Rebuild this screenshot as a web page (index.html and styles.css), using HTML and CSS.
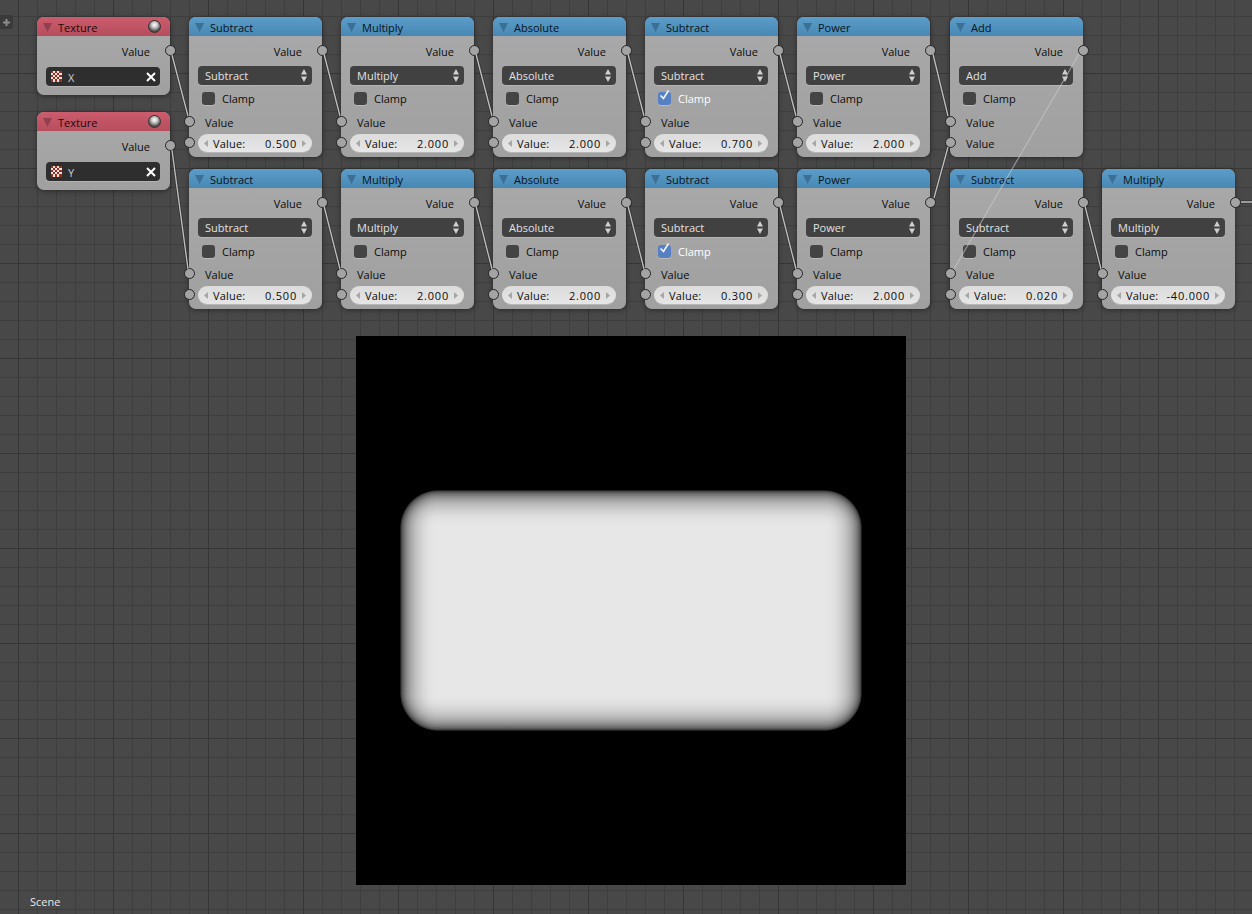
FILE: index.html
```html
<!DOCTYPE html>
<html lang="en">
<head>
<meta charset="utf-8">
<title>Node editor</title>
<link rel="stylesheet" href="styles.css">
</head>
<body>
<svg class="defs" width="0" height="0" aria-hidden="true">
  <symbol id="fold" viewBox="0 0 9 9"><path d="M0 0H9L4.5 9Z"/></symbol>
  <symbol id="updown" viewBox="0 0 6 13"><path d="M3 0L6 5.5H0ZM0 7.5H6L3 13Z"/></symbol>
  <symbol id="left" viewBox="0 0 4 7"><path d="M4 0V7L0 3.5Z"/></symbol>
  <symbol id="right" viewBox="0 0 4 7"><path d="M0 0V7L4 3.5Z"/></symbol>
  <symbol id="tick" viewBox="0 0 13 13"><path d="M2.5 6.5L5.5 9.5L10.5 1.5" fill="none" stroke="#eef3fb" stroke-width="1.7"/></symbol>
  <symbol id="cross" viewBox="0 0 10 10"><path d="M1 1L9 9M9 1L1 9" fill="none" stroke="#fff" stroke-width="2"/></symbol>
  <symbol id="plus" viewBox="0 0 7 7"><path d="M3.5 0V7M0 3.5H7" fill="none" stroke="#8c8c8c" stroke-width="2"/></symbol>
  <symbol id="checker" viewBox="0 0 11 11">
    <rect width="11" height="11" fill="#f0e4e0"/>
    <path fill="#a02c20" d="M0 0h2v2H0zM4 0h2v2H4zM8 0h3v2H8zM2 2h2v2H2zM6 2h2v2H6zM0 4h2v2H0zM4 4h2v2H4zM8 4h3v2H8zM2 6h2v2H2zM6 6h2v2H6zM0 8h2v3H0zM4 8h2v3H4zM8 8h3v3H8z"/>
  </symbol>
</svg>

<main class="canvas">
  <div class="plus-tab"><svg class="plus-icon"><use href="#plus"/></svg></div>

  <div class="render">
    <div class="corner c-tl"></div><div class="edge e-t"></div><div class="corner c-tr"></div>
    <div class="edge e-l"></div><div class="core"></div><div class="edge e-r"></div>
    <div class="corner c-bl"></div><div class="edge e-b"></div><div class="corner c-br"></div>
  </div>

  <article class="node texture tex-x">
    <header class="head"><svg class="fold"><use href="#fold"/></svg><span>Texture</span><span class="sphere"></span></header>
    <div class="body">
      <div class="out">Value</div>
      <div class="tex-field"><svg class="checker"><use href="#checker"/></svg><span class="tex-name">X</span><svg class="cross"><use href="#cross"/></svg></div>
    </div>
    <i class="socket s-out"></i>
  </article>
  <article class="node texture tex-y">
    <header class="head"><svg class="fold"><use href="#fold"/></svg><span>Texture</span><span class="sphere"></span></header>
    <div class="body">
      <div class="out">Value</div>
      <div class="tex-field"><svg class="checker"><use href="#checker"/></svg><span class="tex-name">Y</span><svg class="cross"><use href="#cross"/></svg></div>
    </div>
    <i class="socket s-out"></i>
  </article>

  <article class="node math col-1 row-a">
    <header class="head"><svg class="fold"><use href="#fold"/></svg><span>Subtract</span></header>
    <div class="body">
      <div class="out">Value</div>
      <div class="select"><span>Subtract</span><svg class="updown"><use href="#updown"/></svg></div>
      <div class="check"><span class="box"></span><span>Clamp</span></div>
      <div class="in">Value</div>
      <div class="field"><svg class="arrow"><use href="#left"/></svg><span class="f-label">Value:</span><span class="f-num">0.500</span><svg class="arrow"><use href="#right"/></svg></div>
    </div>
    <i class="socket s-out"></i><i class="socket s-a"></i><i class="socket s-b"></i>
  </article>
  <article class="node math col-2 row-a">
    <header class="head"><svg class="fold"><use href="#fold"/></svg><span>Multiply</span></header>
    <div class="body">
      <div class="out">Value</div>
      <div class="select"><span>Multiply</span><svg class="updown"><use href="#updown"/></svg></div>
      <div class="check"><span class="box"></span><span>Clamp</span></div>
      <div class="in">Value</div>
      <div class="field"><svg class="arrow"><use href="#left"/></svg><span class="f-label">Value:</span><span class="f-num">2.000</span><svg class="arrow"><use href="#right"/></svg></div>
    </div>
    <i class="socket s-out"></i><i class="socket s-a"></i><i class="socket s-b"></i>
  </article>
  <article class="node math col-3 row-a">
    <header class="head"><svg class="fold"><use href="#fold"/></svg><span>Absolute</span></header>
    <div class="body">
      <div class="out">Value</div>
      <div class="select"><span>Absolute</span><svg class="updown"><use href="#updown"/></svg></div>
      <div class="check"><span class="box"></span><span>Clamp</span></div>
      <div class="in">Value</div>
      <div class="field"><svg class="arrow"><use href="#left"/></svg><span class="f-label">Value:</span><span class="f-num">2.000</span><svg class="arrow"><use href="#right"/></svg></div>
    </div>
    <i class="socket s-out"></i><i class="socket s-a"></i><i class="socket s-b"></i>
  </article>
  <article class="node math col-4 row-a">
    <header class="head"><svg class="fold"><use href="#fold"/></svg><span>Subtract</span></header>
    <div class="body">
      <div class="out">Value</div>
      <div class="select"><span>Subtract</span><svg class="updown"><use href="#updown"/></svg></div>
      <div class="check on"><span class="box"><svg class="tick"><use href="#tick"/></svg></span><span>Clamp</span></div>
      <div class="in">Value</div>
      <div class="field"><svg class="arrow"><use href="#left"/></svg><span class="f-label">Value:</span><span class="f-num">0.700</span><svg class="arrow"><use href="#right"/></svg></div>
    </div>
    <i class="socket s-out"></i><i class="socket s-a"></i><i class="socket s-b"></i>
  </article>
  <article class="node math col-5 row-a">
    <header class="head"><svg class="fold"><use href="#fold"/></svg><span>Power</span></header>
    <div class="body">
      <div class="out">Value</div>
      <div class="select"><span>Power</span><svg class="updown"><use href="#updown"/></svg></div>
      <div class="check"><span class="box"></span><span>Clamp</span></div>
      <div class="in">Value</div>
      <div class="field"><svg class="arrow"><use href="#left"/></svg><span class="f-label">Value:</span><span class="f-num">2.000</span><svg class="arrow"><use href="#right"/></svg></div>
    </div>
    <i class="socket s-out"></i><i class="socket s-a"></i><i class="socket s-b"></i>
  </article>
  <article class="node math col-6 row-a">
    <header class="head"><svg class="fold"><use href="#fold"/></svg><span>Add</span></header>
    <div class="body">
      <div class="out">Value</div>
      <div class="select"><span>Add</span><svg class="updown"><use href="#updown"/></svg></div>
      <div class="check"><span class="box"></span><span>Clamp</span></div>
      <div class="in">Value</div>
      <div class="in in-last">Value</div>
    </div>
    <i class="socket s-out"></i><i class="socket s-a"></i><i class="socket s-b"></i>
  </article>

  <article class="node math col-1 row-b">
    <header class="head"><svg class="fold"><use href="#fold"/></svg><span>Subtract</span></header>
    <div class="body">
      <div class="out">Value</div>
      <div class="select"><span>Subtract</span><svg class="updown"><use href="#updown"/></svg></div>
      <div class="check"><span class="box"></span><span>Clamp</span></div>
      <div class="in">Value</div>
      <div class="field"><svg class="arrow"><use href="#left"/></svg><span class="f-label">Value:</span><span class="f-num">0.500</span><svg class="arrow"><use href="#right"/></svg></div>
    </div>
    <i class="socket s-out"></i><i class="socket s-a"></i><i class="socket s-b"></i>
  </article>
  <article class="node math col-2 row-b">
    <header class="head"><svg class="fold"><use href="#fold"/></svg><span>Multiply</span></header>
    <div class="body">
      <div class="out">Value</div>
      <div class="select"><span>Multiply</span><svg class="updown"><use href="#updown"/></svg></div>
      <div class="check"><span class="box"></span><span>Clamp</span></div>
      <div class="in">Value</div>
      <div class="field"><svg class="arrow"><use href="#left"/></svg><span class="f-label">Value:</span><span class="f-num">2.000</span><svg class="arrow"><use href="#right"/></svg></div>
    </div>
    <i class="socket s-out"></i><i class="socket s-a"></i><i class="socket s-b"></i>
  </article>
  <article class="node math col-3 row-b">
    <header class="head"><svg class="fold"><use href="#fold"/></svg><span>Absolute</span></header>
    <div class="body">
      <div class="out">Value</div>
      <div class="select"><span>Absolute</span><svg class="updown"><use href="#updown"/></svg></div>
      <div class="check"><span class="box"></span><span>Clamp</span></div>
      <div class="in">Value</div>
      <div class="field"><svg class="arrow"><use href="#left"/></svg><span class="f-label">Value:</span><span class="f-num">2.000</span><svg class="arrow"><use href="#right"/></svg></div>
    </div>
    <i class="socket s-out"></i><i class="socket s-a"></i><i class="socket s-b"></i>
  </article>
  <article class="node math col-4 row-b">
    <header class="head"><svg class="fold"><use href="#fold"/></svg><span>Subtract</span></header>
    <div class="body">
      <div class="out">Value</div>
      <div class="select"><span>Subtract</span><svg class="updown"><use href="#updown"/></svg></div>
      <div class="check on"><span class="box"><svg class="tick"><use href="#tick"/></svg></span><span>Clamp</span></div>
      <div class="in">Value</div>
      <div class="field"><svg class="arrow"><use href="#left"/></svg><span class="f-label">Value:</span><span class="f-num">0.300</span><svg class="arrow"><use href="#right"/></svg></div>
    </div>
    <i class="socket s-out"></i><i class="socket s-a"></i><i class="socket s-b"></i>
  </article>
  <article class="node math col-5 row-b">
    <header class="head"><svg class="fold"><use href="#fold"/></svg><span>Power</span></header>
    <div class="body">
      <div class="out">Value</div>
      <div class="select"><span>Power</span><svg class="updown"><use href="#updown"/></svg></div>
      <div class="check"><span class="box"></span><span>Clamp</span></div>
      <div class="in">Value</div>
      <div class="field"><svg class="arrow"><use href="#left"/></svg><span class="f-label">Value:</span><span class="f-num">2.000</span><svg class="arrow"><use href="#right"/></svg></div>
    </div>
    <i class="socket s-out"></i><i class="socket s-a"></i><i class="socket s-b"></i>
  </article>
  <article class="node math col-6 row-b">
    <header class="head"><svg class="fold"><use href="#fold"/></svg><span>Subtract</span></header>
    <div class="body">
      <div class="out">Value</div>
      <div class="select"><span>Subtract</span><svg class="updown"><use href="#updown"/></svg></div>
      <div class="check"><span class="box"></span><span>Clamp</span></div>
      <div class="in">Value</div>
      <div class="field"><svg class="arrow"><use href="#left"/></svg><span class="f-label">Value:</span><span class="f-num">0.020</span><svg class="arrow"><use href="#right"/></svg></div>
    </div>
    <i class="socket s-out"></i><i class="socket s-a"></i><i class="socket s-b"></i>
  </article>
  <article class="node math col-7 row-b">
    <header class="head"><svg class="fold"><use href="#fold"/></svg><span>Multiply</span></header>
    <div class="body">
      <div class="out">Value</div>
      <div class="select"><span>Multiply</span><svg class="updown"><use href="#updown"/></svg></div>
      <div class="check"><span class="box"></span><span>Clamp</span></div>
      <div class="in">Value</div>
      <div class="field"><svg class="arrow"><use href="#left"/></svg><span class="f-label">Value:</span><span class="f-num">-40.000</span><svg class="arrow"><use href="#right"/></svg></div>
    </div>
    <i class="socket s-out"></i><i class="socket s-a"></i><i class="socket s-b"></i>
  </article>

  <svg class="wires" viewBox="0 0 1252 914" aria-hidden="true">
    <g class="wire-under">
      <path d="M172 55L188 116M172 150L188 269M324 54L340 116M324 206L340 269M476 54L492 116M476 206L492 269M628 54L644 116M628 206L644 269M780 54L796 116M780 206L796 269M933 54L948 116M1085 206L1101 269M934 198L948 147M1241 202H1252"/>
    </g>
    <g class="wire">
      <path d="M172 55L188 116M172 150L188 269M324 54L340 116M324 206L340 269M476 54L492 116M476 206L492 269M628 54L644 116M628 206L644 269M780 54L796 116M780 206L796 269M933 54L948 116M1085 206L1101 269M934 198L948 147M1241 202H1252"/>
    </g>
    <path class="wire-thin" d="M1079 54L954 269"/>
  </svg>

  <div class="scene">Scene</div>
</main>
</body>
</html>
```
FILE: styles.css
```css
:root {
  --ramp: rgb(231,231,231) 0%, rgb(230,230,230) 10%, rgb(227,227,227) 20%, rgb(222,222,222) 30%,
    rgb(214,214,214) 40%, rgb(203,203,203) 50%, rgb(190,190,190) 60%, rgb(171,171,171) 70%,
    rgb(146,146,146) 80%, rgb(109,109,109) 90%, rgb(79,79,79) 95%, rgb(50,50,50) 98%, rgb(0,0,0) 100%;
}

* { box-sizing: border-box; }

html, body { margin: 0; padding: 0; }

body {
  width: 1252px;
  height: 914px;
  overflow: hidden;
  background: #484848;
  font-family: "Open Sans", "Noto Sans", "Liberation Sans", sans-serif;
  font-size: 11px;
  line-height: 14px;
  color: #0c0c0c;
}

.defs { position: absolute; }

.canvas {
  position: relative;
  width: 1252px;
  height: 914px;
  overflow: hidden;
  background-color: #484848;
  background-image:
    linear-gradient(to right, #363636 1px, transparent 1px),
    linear-gradient(to bottom, #363636 1px, transparent 1px),
    linear-gradient(to right, #3e3e3e 1px, transparent 1px),
    linear-gradient(to bottom, #3e3e3e 1px, transparent 1px);
  background-size: 95px 95px, 95px 95px, 19px 19px, 19px 19px;
  background-position: 18px 0, 0 73px, 18px 0, 0 16px;
}

/* corner tab */
.plus-tab {
  position: absolute;
  left: 0;
  top: 15px;
  width: 13px;
  height: 14px;
  display: flex;
  align-items: center;
  justify-content: center;
  background: #3a3a3a;
  border-radius: 0 3px 3px 0;
}
.plus-icon { width: 7px; height: 7px; }

/* rendered preview */
.render {
  position: absolute;
  left: 356px;
  top: 336px;
  width: 550px;
  height: 549px;
  background: #000;
  display: grid;
  grid-template-columns: 38px 386px 38px;
  grid-template-rows: 38px 165px 38px;
  place-content: center;
}
.core { background: rgb(231,231,231); }
.c-tl { background: radial-gradient(circle 38px at 100% 100%, var(--ramp)); }
.c-tr { background: radial-gradient(circle 38px at 0 100%, var(--ramp)); }
.c-bl { background: radial-gradient(circle 38px at 100% 0, var(--ramp)); }
.c-br { background: radial-gradient(circle 38px at 0 0, var(--ramp)); }
.e-t { background: linear-gradient(to top, var(--ramp)); }
.e-b { background: linear-gradient(to bottom, var(--ramp)); }
.e-l { background: linear-gradient(to left, var(--ramp)); }
.e-r { background: linear-gradient(to right, var(--ramp)); }

/* nodes: free placement on the canvas */
.node {
  position: absolute;
  width: 133px;
  border-radius: 7px;
  background: linear-gradient(to bottom, #a9a9a9, #a0a0a0);
  box-shadow: 0 1px 5px rgba(0, 0, 0, 0.45);
}
.math { height: 140px; }
.texture { width: 133px; height: 78px; left: 37px; }
.tex-x { top: 17px; }
.tex-y { top: 112px; }
.row-a { top: 17px; }
.row-b { top: 169px; }
.col-1 { left: 189px; }
.col-2 { left: 341px; }
.col-3 { left: 493px; }
.col-4 { left: 645px; }
.col-5 { left: 797px; }
.col-6 { left: 950px; }
.col-7 { left: 1102px; }

.head {
  height: 19px;
  display: flex;
  align-items: center;
  padding: 2px 0 0 6px;
  gap: 6px;
  border-radius: 7px 7px 0 0;
  color: #08121a;
  background: linear-gradient(to bottom, #5b9dca, #4787b3);
}
.texture .head {
  color: #1c0a0d;
  background: linear-gradient(to bottom, #cb5c6d, #b64d5d);
}
.fold { width: 9px; height: 9px; margin-top: -1px; fill: #3b6f95; flex: none; }
.texture .fold { fill: #90404e; }

.sphere {
  margin: -2px 9px 0 auto;
  width: 13px;
  height: 13px;
  border-radius: 50%;
  border: 1px solid #333;
  background: radial-gradient(circle at 50% 35%, #fbfbfb 0, #d8d8d8 25%, #8e8e8e 50%, #4a4a4a 72%, #3a3a3a 100%);
}

.body { padding: 0 10px 0 9px; }

.out {
  height: 30px;
  padding-top: 9px;
  padding-right: 10px;
  text-align: right;
}

.select {
  height: 19px;
  padding: 0 5px 0 7px;
  display: flex;
  align-items: center;
  justify-content: space-between;
  color: #e2e2e2;
  background: #414141;
  border-radius: 4px;
  box-shadow: 0 1px 0 rgba(255, 255, 255, 0.18);
}
.updown { width: 6px; height: 13px; fill: #cfcfcf; }

.check {
  height: 13px;
  margin: 7px 0 0 4px;
  display: flex;
  align-items: center;
  gap: 7px;
}
.row-b .check { margin-top: 8px; }
.box {
  position: relative;
  width: 13px;
  height: 13px;
  flex: none;
  border-radius: 3px;
  background: #444;
  box-shadow: 0 1px 0 rgba(255, 255, 255, 0.25);
}
.check.on { color: #fff; }
.check.on .box { background: #5680c2; }
.tick { position: absolute; left: 0; top: -3px; width: 13px; height: 13px; }

.in {
  height: 18px;
  margin-top: 9px;
  padding-left: 7px;
  display: flex;
  align-items: center;
}
.row-b .in { margin-top: 8px; }
.in-last { margin-top: 3px; }

.field {
  height: 18px;
  margin-top: 2px;
  padding: 2px 6px 0;
  display: flex;
  align-items: center;
  border-radius: 9px;
  background: linear-gradient(to bottom, #dcdcdc, #e6e6e6);
  box-shadow: 0 1px 0 rgba(255, 255, 255, 0.25);
}
.arrow { width: 4px; height: 7px; margin-top: -2px; fill: #a6a6a6; flex: none; }
.f-label { margin-left: 5px; letter-spacing: 0.2px; }
.f-num { margin-left: auto; margin-right: 5px; letter-spacing: 0.8px; }

.tex-field {
  height: 19px;
  display: flex;
  align-items: center;
  padding: 0 4px 0 5px;
  color: #d0d0d0;
  background: #2e2e2e;
  border-radius: 4px;
  box-shadow: 0 1px 0 rgba(255, 255, 255, 0.18);
}
.checker { width: 11px; height: 11px; flex: none; }
.tex-name { margin-left: 6px; padding-top: 2px; }
.cross { width: 10px; height: 10px; margin-left: auto; }

.texture .body { padding-right: 10px; }
.texture .out { height: 31px; }

.socket {
  position: absolute;
  width: 11px;
  height: 11px;
  border-radius: 50%;
  background: #a4a4a4;
  border: 1px solid #232323;
}
.s-out { right: -6px; top: 28px; }
.s-a { left: -5px; top: 99px; }
.s-b { left: -5px; top: 120px; }

/* links */
.wires {
  position: absolute;
  left: 0;
  top: 0;
  width: 1252px;
  height: 914px;
  pointer-events: none;
  fill: none;
}
.wire-under { stroke: rgba(0, 0, 0, 0.35); stroke-width: 2.8; }
.wire { stroke: #bdbdbd; stroke-width: 1.4; }
.wire-thin { stroke: rgba(205, 205, 205, 0.6); stroke-width: 1.2; }

.scene {
  position: absolute;
  left: 30px;
  top: 895px;
  color: #e8e8e8;
}
```
